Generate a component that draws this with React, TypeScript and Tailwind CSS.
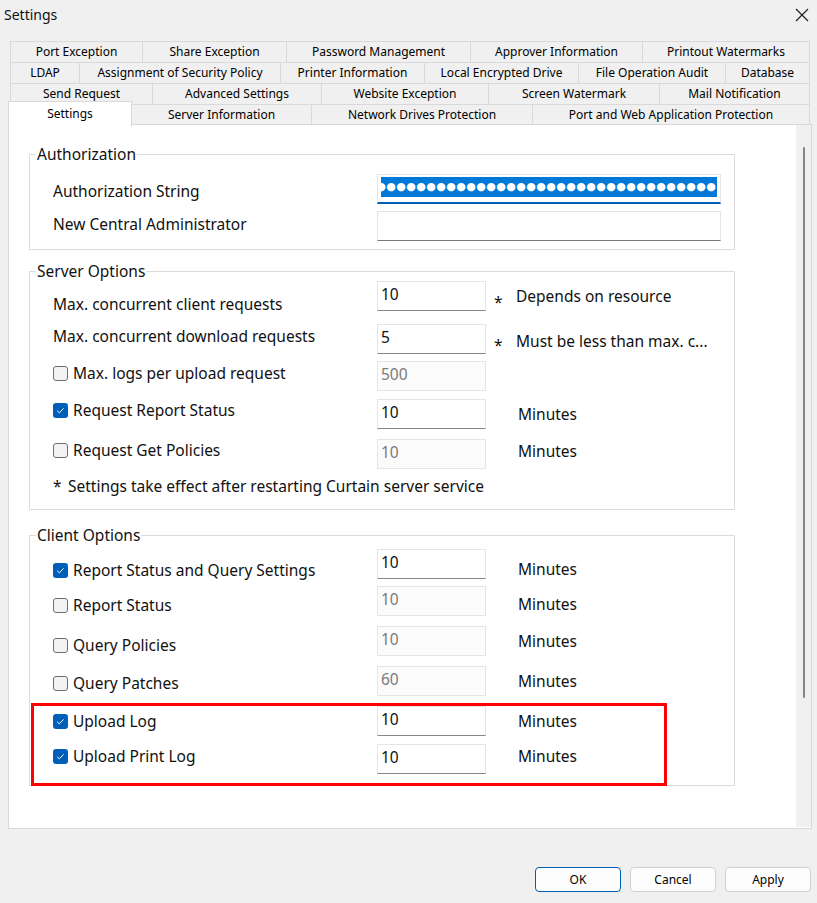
import React from 'react';

type Tab = { label: string; w: string };

const tabRows: Tab[][] = [
  [
    { label: 'Port Exception', w: 'w-[132px]' },
    { label: 'Share Exception', w: 'w-[144px]' },
    { label: 'Password Management', w: 'w-[184px]' },
    { label: 'Approver Information', w: 'w-[172px]' },
    { label: 'Printout Watermarks', w: 'w-[168px]' },
  ],
  [
    { label: 'LDAP', w: 'w-[69px]' },
    { label: 'Assignment of Security Policy', w: 'w-[201px]' },
    { label: 'Printer Information', w: 'w-[144px]' },
    { label: 'Local Encrypted Drive', w: 'w-[154px]' },
    { label: 'File Operation Audit', w: 'w-[147px]' },
    { label: 'Database', w: 'w-[85px]' },
  ],
  [
    { label: 'Send Request', w: 'w-[142px]' },
    { label: 'Advanced Settings', w: 'w-[169px]' },
    { label: 'Website Exception', w: 'w-[167px]' },
    { label: 'Screen Watermark', w: 'w-[171px]' },
    { label: 'Mail Notification', w: 'w-[151px]' },
  ],
];

const lastRow: Tab[] = [
  { label: 'Server Information', w: 'w-[180px]' },
  { label: 'Network Drives Protection', w: 'w-[221px]' },
  { label: 'Port and Web Application Protection', w: 'w-[277px]' },
];

const Checkbox: React.FC<{ checked?: boolean }> = ({ checked }) =>
  checked ? (
    <span className="w-[15px] h-[15px] rounded-[3px] bg-[#005fb8] flex items-center justify-center shrink-0">
      <svg width="15" height="15" viewBox="0 0 15 15">
        <path d="M4.2 7.8 L6.3 9.8 L10.6 5.4" fill="none" stroke="white" strokeWidth="1" />
      </svg>
    </span>
  ) : (
    <span className="w-[15px] h-[15px] rounded-[3px] border border-[#6e6e6e] bg-[#f3f3f3] shrink-0" />
  );

const Input: React.FC<{ value: string; disabled?: boolean }> = ({ value, disabled }) =>
  disabled ? (
    <div className="w-[109px] h-[30px] shrink-0 border border-[#e5e5e5] bg-[#fbfbfb] pl-[3px] pt-[2px] leading-[20px] text-[#7a7a7a]">
      {value}
    </div>
  ) : (
    <div className="w-[109px] h-[30px] shrink-0 border border-[#e5e5e5] border-b-[#868686] bg-white pl-[3px] pt-[2px] leading-[20px] text-[#111]">
      {value}
    </div>
  );

const Fieldset: React.FC<{ title: string; className: string; children: React.ReactNode }> = ({
  title,
  className,
  children,
}) => (
  <fieldset className={`w-[706px] min-w-0 border border-[#dcdcdc] pl-[23px] ${className}`}>
    <legend className="ml-[-17px] px-[1px] leading-[20px]">{title}</legend>
    {children}
  </fieldset>
);

type OptRow = {
  h: string;
  label: string;
  labelMt: string;
  check?: 'on' | 'off';
  value: string;
  disabled?: boolean;
  minutesMt?: string;
};

const serverRows: OptRow[] = [
  { h: 'h-[38px]', label: 'Max. logs per upload request', labelMt: 'mt-[2px]', check: 'off', value: '500', disabled: true },
  { h: 'h-[40px]', label: 'Request Report Status', labelMt: 'mt-[1px]', check: 'on', value: '10', minutesMt: 'mt-[5px]' },
  { h: 'h-[37px]', label: 'Request Get Policies', labelMt: 'mt-[1px]', check: 'off', value: '10', disabled: true, minutesMt: 'mt-[2px]' },
];

const clientRows: OptRow[] = [
  { h: 'h-[37px]', label: 'Report Status and Query Settings', labelMt: 'mt-[11px]', check: 'on', value: '10', minutesMt: 'mt-[10px]' },
  { h: 'h-[40px]', label: 'Report Status', labelMt: 'mt-[9px]', check: 'off', value: '10', disabled: true, minutesMt: 'mt-[8px]' },
  { h: 'h-[40px]', label: 'Query Policies', labelMt: 'mt-[9px]', check: 'off', value: '10', disabled: true, minutesMt: 'mt-[5px]' },
  { h: 'h-[40px]', label: 'Query Patches', labelMt: 'mt-[7px]', check: 'off', value: '60', disabled: true, minutesMt: 'mt-[5px]' },
  { h: 'h-[38px]', label: 'Upload Log', labelMt: 'mt-[5px]', check: 'on', value: '10', minutesMt: 'mt-[5px]' },
  { h: 'h-[30px]', label: 'Upload Print Log', labelMt: 'mt-[2px]', check: 'on', value: '10', minutesMt: 'mt-[2px]' },
];

const OptionRow: React.FC<{ row: OptRow }> = ({ row }) => (
  <div className={`flex items-start ${row.h}`}>
    <div className={`w-[324px] h-[20px] flex items-center ${row.labelMt}`}>
      <Checkbox checked={row.check === 'on'} />
      <span className="ml-[5px] leading-[20px]">{row.label}</span>
    </div>
    <Input value={row.value} disabled={row.disabled} />
    {row.minutesMt && <span className={`ml-[32px] leading-[20px] ${row.minutesMt}`}>Minutes</span>}
  </div>
);

export default function App() {
  return (
    <div className="relative w-[817px] h-[903px] overflow-hidden bg-[#f0f0f0] text-[15.5px] text-[#111] font-['Noto_Sans',sans-serif]">
      {/* Title bar */}
      <div className="h-[41px] flex items-start justify-between">
        <div className="pl-[4px] pt-[5px] text-[14px] leading-[20px]">Settings</div>
        <svg className="mt-[8px] mr-[8px]" width="14" height="14" viewBox="0 0 14 14">
          <path d="M1 1 L13 13 M13 1 L1 13" stroke="#1a1a1a" strokeWidth="1.1" fill="none" />
        </svg>
      </div>

      {/* Tabs */}
      <div className="relative z-10 text-[12px] text-black">
        {tabRows.map((row, ri) => (
          <div key={ri} className="flex h-[21px] pl-[10px]">
            {row.map((t, i) => (
              <div
                key={t.label}
                className={`${t.w} h-[21px] flex items-center justify-center border-l border-t border-[#d9d9d9] ${
                  i === row.length - 1 ? 'border-r' : ''
                }`}
              >
                {t.label}
              </div>
            ))}
          </div>
        ))}
        <div className="flex items-start h-[21px] pl-[8px]">
          <div className="w-[124px] h-[25px] -mt-[3px] pb-[1px] flex items-center justify-center bg-white border-l border-t border-r border-[#d9d9d9]">
            Settings
          </div>
          {lastRow.map((t) => (
            <div
              key={t.label}
              className={`${t.w} h-[21px] flex items-center justify-center border-t border-r border-[#d9d9d9]`}
            >
              {t.label}
            </div>
          ))}
        </div>
      </div>

      {/* Tab page */}
      <div className="relative z-0 -mt-px ml-[8px] w-[804px] h-[705px] border border-[#d9d9d9] bg-white flex">
        <div className="flex-1 pl-[20px] pt-[19px]">
          <Fieldset title="Authorization" className="pt-[10px] pb-[8px]">
            <div className="flex items-start h-[37px]">
              <div className="w-[324px] mt-[7px] leading-[20px]">Authorization String</div>
              <div className="w-[344px] h-[30px] border border-[#e5e5e5] border-b-2 border-b-[#005fb8] pl-[3px] pt-[2px]">
                <div className="w-[336px] h-[20px] bg-[#0078d7] overflow-hidden">
                  <div className="flex -ml-[5px] text-white text-[11px] font-['DejaVu_Sans',sans-serif]">
                    {Array.from({ length: 34 }).map((_, i) => (
                      <span key={i} className="w-[10px] h-[20px] shrink-0 flex items-center justify-center">
                        ●
                      </span>
                    ))}
                  </div>
                </div>
              </div>
            </div>
            <div className="flex items-start h-[30px]">
              <div className="w-[324px] mt-[3px] leading-[20px]">New Central Administrator</div>
              <div className="w-[344px] h-[30px] border border-[#e5e5e5] border-b-[#7a7a7a] bg-white" />
            </div>
          </Fieldset>

          <Fieldset title="Server Options" className="mt-[11px] pb-[13px]">
            <div className="flex items-start h-[43px]">
              <div className="w-[324px] mt-[13px] leading-[20px]">Max. concurrent client requests</div>
              <Input value="10" />
              <span className="ml-[8px] w-[22px] mt-[11px] leading-[20px]">*</span>
              <span className="mt-[5px] leading-[20px]">Depends on resource</span>
            </div>
            <div className="flex items-start h-[37px]">
              <div className="w-[324px] mt-[2px] leading-[20px]">Max. concurrent download requests</div>
              <Input value="5" />
              <span className="ml-[8px] w-[22px] mt-[11px] leading-[20px]">*</span>
              <span className="mt-[7px] leading-[20px]">Must be less than max. c...</span>
            </div>
            {serverRows.map((r) => (
              <OptionRow key={r.label} row={r} />
            ))}
            <div className="h-[20px] leading-[20px] flex">
              <span className="w-[15px]">*</span>
              <span>Settings take effect after restarting Curtain server service</span>
            </div>
          </Fieldset>

          <Fieldset title="Client Options" className="mt-[15px] pt-[4px] pb-[11px]">
            {clientRows.map((r) => (
              <OptionRow key={r.label} row={r} />
            ))}
          </Fieldset>
        </div>
        <div className="w-[15px] bg-[#f0f0f0] mb-[1px]">
          <div className="ml-[7px] mt-[22px] w-[2px] h-[551px] rounded-full bg-[#858585]" />
        </div>
      </div>

      {/* Buttons */}
      <div className="flex justify-end gap-[9px] pr-[6px] mt-[38px] text-[12px] text-black">
        <button className="w-[86px] h-[25px] rounded-[4px] border border-[#005fb8] bg-[#fdfdfd]">OK</button>
        <button className="w-[86px] h-[25px] rounded-[4px] border border-[#d0d0d0] bg-[#fdfdfd]">Cancel</button>
        <button className="w-[86px] h-[25px] rounded-[4px] border border-[#d0d0d0] bg-[#fdfdfd]">Apply</button>
      </div>

      {/* Highlight annotation */}
      <div className="absolute left-[31px] top-[703px] w-[636px] h-[83px] border-[3px] border-[#ff0000] pointer-events-none" />
    </div>
  );
}
